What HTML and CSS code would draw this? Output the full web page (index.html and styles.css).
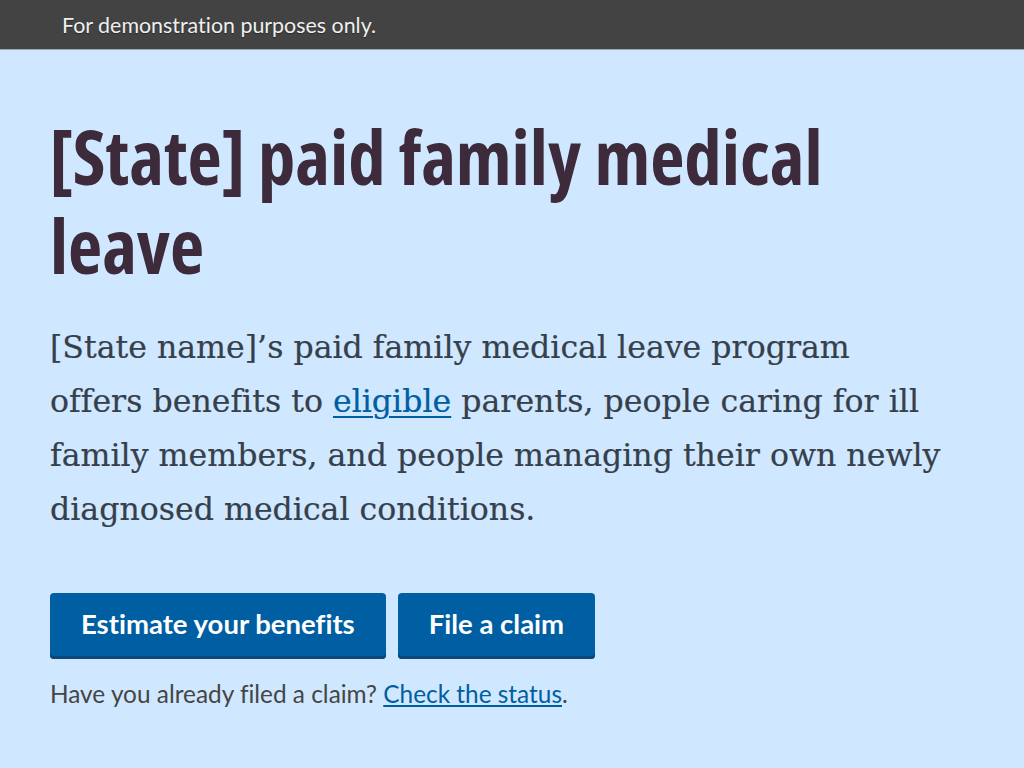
FILE: index.html
```html
<!DOCTYPE html>
<html lang="en">
<head>
<meta charset="utf-8">
<title>[State] paid family medical leave</title>
<link rel="stylesheet" href="styles.css">
</head>
<body>
<div class="demo-banner">For demonstration purposes only.</div>
<main>
  <section class="hero">
    <h1 class="hero-title">[State] paid family medical leave</h1>
    <p class="hero-lead">[State name]’s paid family medical leave program<br>
      offers benefits to <a href="#">eligible</a> parents, people caring for ill<br>
      family members, and people managing their own newly<br>
      diagnosed medical conditions.</p>
    <div class="hero-actions">
      <a class="btn" href="#">Estimate your benefits</a>
      <a class="btn" href="#">File a claim</a>
    </div>
    <p class="hero-note">Have you already filed a claim? <a href="#">Check the status</a>.</p>
  </section>
  <section class="content"></section>
</main>
</body>
</html>
```
FILE: styles.css
```css
html, body {
  margin: 0;
  padding: 0;
}
body {
  font-family: "Lato", "Noto Sans", sans-serif;
  font-variant-ligatures: no-common-ligatures;
  color: #1b1b1b;
  background: #ffffff;
}
.demo-banner {
  background: #434343;
  color: #f0f0f0;
  font-size: 21.4px;
  line-height: 50px;
  height: 50px;
  padding-left: 62px;
  text-shadow: 0 1px 1px rgba(0,0,0,0.4);
  border-bottom: 1px solid #9aa6b1;
  box-sizing: border-box;
}
.hero {
  background: #cfe8ff;
  padding: 62px 50px 120px;
}
.hero-title {
  margin: 0;
  font-family: "Open Sans", sans-serif;
  font-stretch: 75%;
  font-weight: 700;
  font-size: 74.7px;
  line-height: 88.8px;
  color: #3d2b3b;
}
.hero-lead {
  margin: 30px 0 0;
  font-family: "DejaVu Serif", serif;
  font-size: 31.6px;
  line-height: 54px;
  color: #36404b;
  white-space: nowrap;
  -webkit-text-stroke: 0.2px #36404b;
}
.hero-lead a {
  color: #005ea2;
  -webkit-text-stroke: 0.2px #005ea2;
  text-decoration-thickness: 2px;
  text-underline-offset: 4px;
}
.hero-actions {
  display: flex;
  gap: 12px;
  margin-top: 57px;
}
.btn {
  display: inline-block;
  background: #005ea2;
  color: #ffffff;
  text-decoration: none;
  font-weight: 700;
  font-size: 27.5px;
  line-height: 33px;
  padding: 14px 31px 19px;
  border-radius: 4px;
  box-shadow: inset 0 -3px 0 #0b4778;
}
.hero-note {
  margin: 19px 0 0;
  font-size: 24.4px;
  line-height: 32px;
  color: #454545;
}
.hero-note a {
  color: #005ea2;
  text-underline-offset: 2px;
}
.content {
  height: 1020px;
}
```
